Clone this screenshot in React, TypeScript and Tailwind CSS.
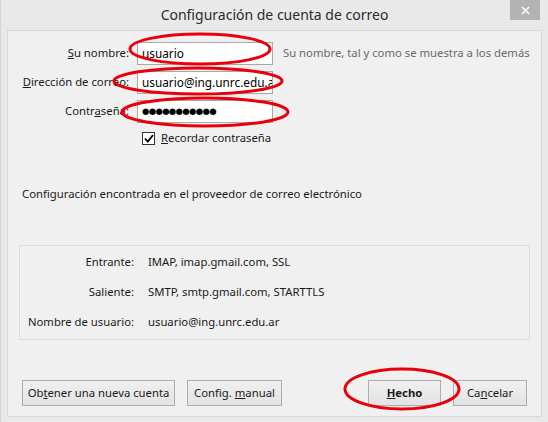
import React from "react";

const font = { fontFamily: '"Noto Sans", "Open Sans", Arial, sans-serif' };

function Btn({ children, bold }: { children: React.ReactNode; bold?: boolean }) {
  return (
    <button
      type="button"
      className={
        "h-[26px] w-full whitespace-nowrap border border-[#adadad] bg-gradient-to-b from-[#f0f0f0] to-[#e3e3e3] text-[11.3px] leading-none text-[#1a1a1a] " +
        (bold ? "font-bold" : "")
      }
    >
      {children}
    </button>
  );
}

function Field({ label, value, wide }: { label: React.ReactNode; value: React.ReactNode; wide?: boolean }) {
  return (
    <div className="flex h-[23px] items-center whitespace-nowrap">
      <div className="w-[121px] text-right text-[11.3px] text-[#1a1a1a]">{label}</div>
      <div className="ml-[8px] flex h-[23px] w-[136px] items-center overflow-hidden border border-[#a9a9a9] bg-white pl-[4px] text-[11.8px] text-black">
        {value}
      </div>
      {wide && (
        <span className="ml-[10px] text-[11.3px] text-[#6a6a6a]">Su nombre, tal y como se muestra a los demás</span>
      )}
    </div>
  );
}

export default function App() {
  return (
    <div className="relative flex h-[422px] w-[548px] flex-col border-l border-[#d4d4d4] bg-[#e9e9e9] leading-tight" style={font}>
      {/* Title bar */}
      <div className="relative flex h-[30px] items-center justify-center">
        <span className="text-[14px] text-[#2b2b2b]">Configuración de cuenta de correo</span>
        <div className="absolute right-[8px] top-0 flex h-[20px] w-[30px] items-center justify-center bg-[#b3b3b3]">
          <svg width="9" height="9" viewBox="0 0 9 9">
            <path d="M1 1 L8 8 M8 1 L1 8" stroke="white" strokeWidth="1.6" />
          </svg>
        </div>
      </div>

      {/* Panel */}
      <div className="mx-[6px] mb-[5px] flex flex-1 flex-col border border-[#d9d9d9] bg-[#f0f0f0]">
        <div className="mt-[11px] flex flex-col gap-[6px]">
          <Field wide label={<><u>S</u>u nombre:</>} value="usuario" />
          <Field label={<><u>D</u>irección de correo:</>} value="usuario@ing.unrc.edu.a" />
          <Field
            label={<>Contr<u>a</u>seña:</>}
            value={
              <span className="text-[8.5px] tracking-[-0.7px]" style={{ fontFamily: '"DejaVu Sans", sans-serif' }}>
                ●●●●●●●●●●●
              </span>
            }
          />
        </div>

        <label className="ml-[134px] mt-[8px] flex h-[15px] items-center gap-[6px] text-[11.3px] text-[#1a1a1a]">
          <span className="flex h-[13px] w-[13px] items-center justify-center border border-[#333] bg-white">
            <svg width="10" height="9" viewBox="0 0 10 9">
              <path d="M1 4.5 L3.8 7.5 L9 1" stroke="black" strokeWidth="1.8" fill="none" />
            </svg>
          </span>
          <span>
            <u>R</u>ecordar contraseña
          </span>
        </label>

        <div className="ml-[14px] mt-[41px] h-[14px] text-[11.3px] text-[#1a1a1a]">
          Configuración encontrada en el proveedor de correo electrónico
        </div>

        <div className="mx-[11px] mt-[44px] flex h-[95px] flex-col justify-center gap-[16px] border border-[#dcdcdc] text-[11.3px] text-[#1a1a1a]">
          {[
            ["Entrante:", "IMAP, imap.gmail.com, SSL"],
            ["Saliente:", "SMTP, smtp.gmail.com, STARTTLS"],
            ["Nombre de usuario:", "usuario@ing.unrc.edu.ar"],
          ].map(([k, v]) => (
            <div key={k} className="flex h-[14px] items-center">
              <span className="w-[114px] text-right">{k}</span>
              <span className="ml-[14px]">{v}</span>
            </div>
          ))}
        </div>

        <div className="mb-[10px] mt-auto flex items-center px-[14px]">
          <div className="w-[153px]">
            <Btn>
              Ob<u>t</u>ener una nueva cuenta
            </Btn>
          </div>
          <div className="ml-[12px] w-[95px]">
            <Btn>
              Config. <u>m</u>anual
            </Btn>
          </div>
          <div className="ml-auto flex gap-[12px]">
            <div className="w-[73px]">
              <Btn bold>
                <u>H</u>echo
              </Btn>
            </div>
            <div className="w-[74px]">
              <Btn>
                Ca<u>n</u>celar
              </Btn>
            </div>
          </div>
        </div>
      </div>

      {/* Red annotation marks drawn over the dialog */}
      <svg className="pointer-events-none absolute left-0 top-0" width="548" height="422">
        <g fill="none" stroke="#e8000b" strokeWidth="3">
          <ellipse cx="199" cy="49" rx="70" ry="15" />
          <ellipse cx="197" cy="81" rx="84" ry="13" />
          <ellipse cx="204" cy="112" rx="83" ry="14" />
          <ellipse cx="401" cy="389" rx="57" ry="20" />
        </g>
      </svg>
    </div>
  );
}
